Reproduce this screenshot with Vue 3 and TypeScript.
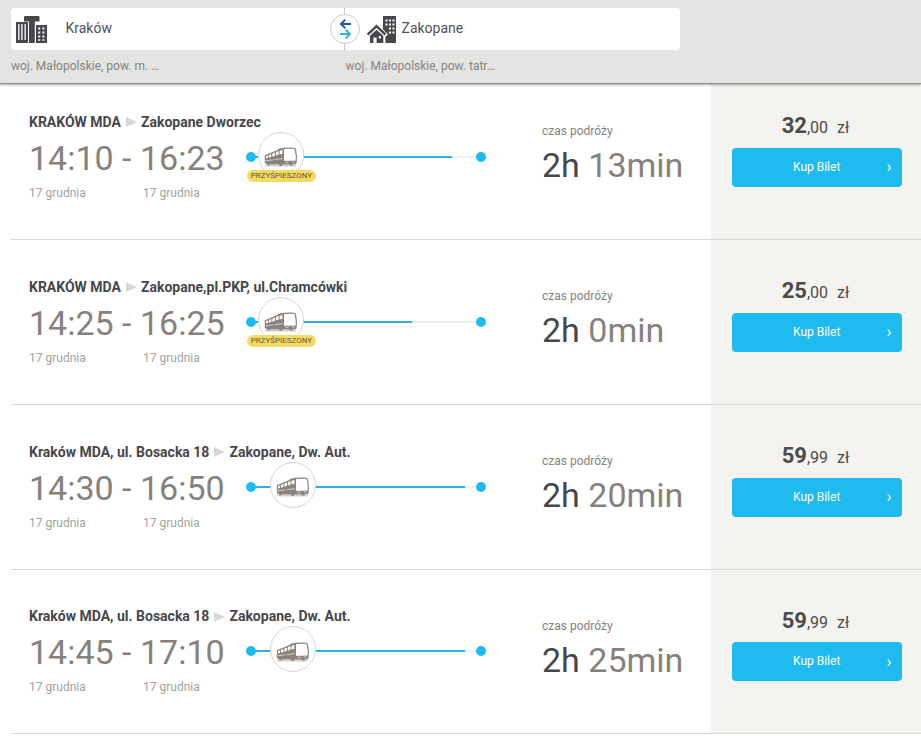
<script setup lang="ts">
interface Connection {
  id: number
  from: string
  to: string
  departure: string
  arrival: string
  hours: string
  minutes: string
  price: string
  cents: string
  fast: boolean
  progress: number
}

const day = '17 grudnia'

const connections: Connection[] = [
  { id: 1, from: 'KRAKÓW MDA', to: 'Zakopane Dworzec', departure: '14:10', arrival: '16:23', hours: '2h', minutes: '13min', price: '32', cents: ',00', fast: true, progress: 201 },
  { id: 2, from: 'KRAKÓW MDA', to: 'Zakopane,pl.PKP, ul.Chramcówki', departure: '14:25', arrival: '16:25', hours: '2h', minutes: '0min', price: '25', cents: ',00', fast: true, progress: 161 },
  { id: 3, from: 'Kraków MDA, ul. Bosacka 18', to: 'Zakopane, Dw. Aut.', departure: '14:30', arrival: '16:50', hours: '2h', minutes: '20min', price: '59', cents: ',99', fast: false, progress: 214 },
  { id: 4, from: 'Kraków MDA, ul. Bosacka 18', to: 'Zakopane, Dw. Aut.', departure: '14:45', arrival: '17:10', hours: '2h', minutes: '25min', price: '59', cents: ',99', fast: false, progress: 214 },
]
</script>

<template>
  <div class="page">
    <header class="search">
      <div class="fields">
        <div class="field field-from">
          <svg class="city" width="32" height="28" viewBox="0 0 32 28">
            <path fill="#47464b" d="M9 0h13.5q1 0 1 1v4.6h-4.7V27H13V5.6H8V1q0-1 1-1z" />
            <path fill="#47464b" d="M0 6h12v21H0zM20 9h11v18H20z" />
            <path fill="#fff" d="M2.2 8h1.3v16H2.2zM5.3 8h1.3v16H5.3zM8.5 8h1.3v16H8.5z" />
            <path fill="#fff" d="M22.2 11.5h2v2h-2zM26.4 11.5h2v2h-2zM22.2 15.5h2v2h-2zM26.4 15.5h2v2h-2zM22.2 19.5h2v2h-2zM26.4 19.5h2v2h-2zM22.2 23.2h2v1.6h-2zM26.4 23.2h2v1.6h-2z" />
          </svg>
          <span>Kraków</span>
        </div>
        <div class="field field-to">
          <svg class="home" width="31" height="28" viewBox="0 0 31 28">
            <path fill="#47464b" d="M16 0h13v27H16z" />
            <path fill="#fff" d="M18.5 3.5h2v2h-2zM22 3.5h2v2h-2zM25.5 3.5h2v2h-2zM18.5 7.5h2v2h-2zM22 7.5h2v2h-2zM25.5 7.5h2v2h-2zM22 11.5h2v2h-2zM25.5 11.5h2v2h-2zM22 15.5h2v2h-2zM25.5 15.5h2v2h-2z" />
            <path fill="#fff" d="M9.5 7.5L21 18.3l-2.6 2.4V27H1V12z" />
            <path fill="none" stroke="#47464b" stroke-width="2.4" d="M.6 18.6L9.5 10.2l9 8.4" />
            <path fill="#47464b" d="M3 19.8l6.5-6.1 6.8 6.1V27H9.6v-5.4H6.4V27H3z" />
            <path fill="#fff" d="M11.8 20h2.2v2.4h-2.2z" />
          </svg>
          <span>Zakopane</span>
        </div>
        <div class="swap">
          <svg width="28" height="28" viewBox="0 0 28 28" fill="none" stroke-width="1.9">
            <path stroke="#1c5a99" d="M20 9H10M14.3 4.6L9.9 9l4.4 4.4" />
            <path stroke="#36aee0" d="M9 19h10.2M14.7 14.6l4.4 4.4-4.4 4.4" />
          </svg>
        </div>
      </div>
      <div class="regions">
        <span class="region">woj. Małopolskie, pow. m. …</span>
        <span class="region">woj. Małopolskie, pow. tatr…</span>
      </div>
    </header>

    <main class="results">
      <article v-for="c in connections" :key="c.id" class="row">
        <section class="journey">
          <h2 class="stops">
            <span>{{ c.from }}</span>
            <i class="arrow"></i>
            <span>{{ c.to }}</span>
          </h2>
          <div class="timing">
            <div class="times">
              <div class="clock">{{ c.departure }} - {{ c.arrival }}</div>
              <div class="dates">
                <span>{{ day }}</span>
                <span>{{ day }}</span>
              </div>
            </div>
            <div class="track">
              <div class="line"></div>
              <div class="line done" :style="{ width: c.progress + 'px' }"></div>
              <i class="dot"></i>
              <i class="dot dot-end"></i>
              <div class="vehicle" :class="{ shifted: !c.fast }">
                <svg width="34" height="20" viewBox="0 0 34 20">
                  <path fill="#8a837c" d="M.8 8.2L14 2.8 20 1v15.5L31 14.5l1 1.8-.8 1H29l-.8 1.2h-2l-.7-1h-6.8l-.8 1.2h-2.2l-.8-1.2H6l-.8.8H3.5l-.8-1.2-1.9-1.1z" />
                  <path fill="#8a837c" d="M20 13.5h11.8v3.6H20z" />
                  <path fill="none" stroke="#8a837c" stroke-width="1.2" d="M14 2.6Q20 .9 29 1.2q2.2 0 2.6 2.3Q33 10 32 16.5" />
                  <path fill="#fff" d="M20.3 3.2Q25 1.9 30 2.6q1.6 5 1 10.4-5 .9-10.8.8z" />
                  <path fill="#fff" d="M2 9.3l1.9-1v2.6l-1.9.5zM4.9 8.1l2.4-1.1v3l-2.4.8zM8.3 6.7l2.6-1.1v3.2l-2.6.9zM11.9 5.2l2.7-1.1v3.4l-2.7.9zM15.6 3.7l2.8-.8v3.8l-2.8.8z" />
                  <path stroke="#fff" stroke-width=".6" d="M1.5 13.8l8-1M11 12.6l8-1M21.5 15.5l3-.2M28 15.1l2.6-.3" />
                  <path stroke="#8a837c" stroke-width=".6" d="M1 18.8h31" />
                </svg>
              </div>
              <span v-if="c.fast" class="badge">PRZYŚPIESZONY</span>
            </div>
          </div>
        </section>
        <section class="duration">
          <div class="label">czas podróży</div>
          <div class="length"><b>{{ c.hours }}</b> {{ c.minutes }}</div>
        </section>
        <section class="offer">
          <div class="price"><b>{{ c.price }}</b><span>{{ c.cents }}</span><span class="currency">zł</span></div>
          <button class="buy" type="button">
            <span>Kup Bilet</span>
            <span class="chevron">›</span>
          </button>
        </section>
      </article>
    </main>
  </div>
</template>

<style>
body {
  background: #fff;
  overflow: hidden;
}
</style>

<style scoped>
.page {
  height: 736px;
  overflow: hidden;
  font-family: Roboto, "Liberation Sans", sans-serif;
  color: #47464b;
}
.search {
  position: relative;
  z-index: 1;
  box-sizing: border-box;
  height: 84px;
  padding: 8px 11px 0;
  background: #e4e4e2;
  border-bottom: 1px solid #8e8e90;
  box-shadow: 0 1px 2px rgba(0, 0, 0, 0.35);
}
.fields {
  position: relative;
  display: flex;
  width: 669px;
  height: 42px;
  background: #fff;
  border-radius: 4px;
}
.field {
  box-sizing: border-box;
  display: flex;
  align-items: center;
  font-size: 14px;
  color: #505055;
}
.field span {
  margin-top: -2px;
}
.field-from {
  width: 334px;
  padding-left: 5px;
  gap: 17.5px;
  border-right: 1px solid #c4c4c4;
}
.field-to {
  padding-left: 22px;
  gap: 3.5px;
}
.city,
.home {
  margin-top: 1px;
}
.swap {
  position: absolute;
  left: 319px;
  top: 6px;
  width: 28px;
  height: 28px;
  border: 1px solid #c8c8c8;
  border-radius: 50%;
  background: #fff;
}
.swap svg {
  display: block;
}
.regions {
  display: flex;
  margin-top: 8px;
  font-size: 12px;
  line-height: 16px;
  color: #858583;
}
.region {
  width: 334.6px;
}
.results {
  margin-top: -8.8px;
}
.row {
  box-sizing: border-box;
  display: grid;
  grid-template-columns: 518px 182px 210px;
  height: 164.8px;
  margin-left: 11px;
  border-bottom: 1px solid #d9d9d7;
}
.journey {
  padding: 37.75px 0 0 18px;
}
.stops {
  display: flex;
  align-items: center;
  margin: 0;
  font-size: 14px;
  font-weight: 700;
  line-height: 18px;
  color: #47464b;
  white-space: nowrap;
}
.arrow {
  margin: 1px 4px 0 5px;
  border: solid transparent;
  border-width: 5.5px 0 5.5px 11px;
  border-left-color: #d8d7d4;
}
.timing {
  display: flex;
}
.times {
  width: 217px;
}
.clock {
  font-size: 34px;
  line-height: 42px;
  margin-top: 6px;
  color: #87817c;
  white-space: nowrap;
}
.dates {
  display: flex;
  margin-top: 6px;
  font-size: 12px;
  line-height: 16px;
  color: #a3a29d;
}
.dates span {
  flex: none;
  width: 114px;
}
.track {
  position: relative;
  width: 240px;
  height: 60px;
}
.line {
  position: absolute;
  left: 5px;
  top: 25px;
  width: 230px;
  height: 2px;
  background: #f0efed;
}
.line.done {
  background: #2cb2e4;
}
.dot {
  position: absolute;
  left: 0;
  top: 21px;
  width: 10px;
  height: 10px;
  border-radius: 50%;
  background: #1dbbf0;
}
.dot-end {
  left: 230px;
}
.vehicle {
  position: absolute;
  left: 12px;
  top: 1px;
  width: 44px;
  height: 44px;
  border: 1px solid #d6d5d3;
  border-radius: 50%;
  background: #fff;
}
.vehicle.shifted {
  left: 24px;
}
.vehicle svg {
  display: block;
  margin: 14.5px 0 0 4.5px;
}
.badge {
  position: absolute;
  left: 1px;
  top: 39px;
  width: 69px;
  height: 12px;
  border-radius: 6px;
  background: #f3da65;
  color: #675d28;
  font-size: 8px;
  line-height: 12px;
  text-align: center;
}
.duration {
  padding: 47px 0 0 13px;
}
.label {
  font-size: 12px;
  line-height: 18px;
  color: #85817e;
}
.length {
  margin-top: 4px;
  font-size: 34px;
  line-height: 42px;
  color: #87817e;
  white-space: nowrap;
}
.length b {
  font-weight: 400;
  color: #47464b;
}
.offer {
  padding: 37px 19px 0 21px;
  background: #f4f3ef;
}
.price {
  display: flex;
  align-items: baseline;
  justify-content: center;
  height: 35.75px;
  padding-right: 3px;
  font-size: 16px;
  line-height: 27px;
  color: #4b4b4b;
}
.price b {
  font-size: 22px;
  font-weight: 700;
}
.currency {
  margin-left: 9px;
}
.buy {
  box-sizing: border-box;
  display: flex;
  align-items: center;
  justify-content: space-between;
  width: 170px;
  height: 39px;
  padding: 0 10.5px 1px 61px;
  border: 0;
  border-radius: 4px;
  background: #1dbbf0;
  color: #fff;
  font-family: inherit;
  font-size: 12px;
}
.chevron {
  margin-top: -1px;
  font-size: 17px;
}
</style>
